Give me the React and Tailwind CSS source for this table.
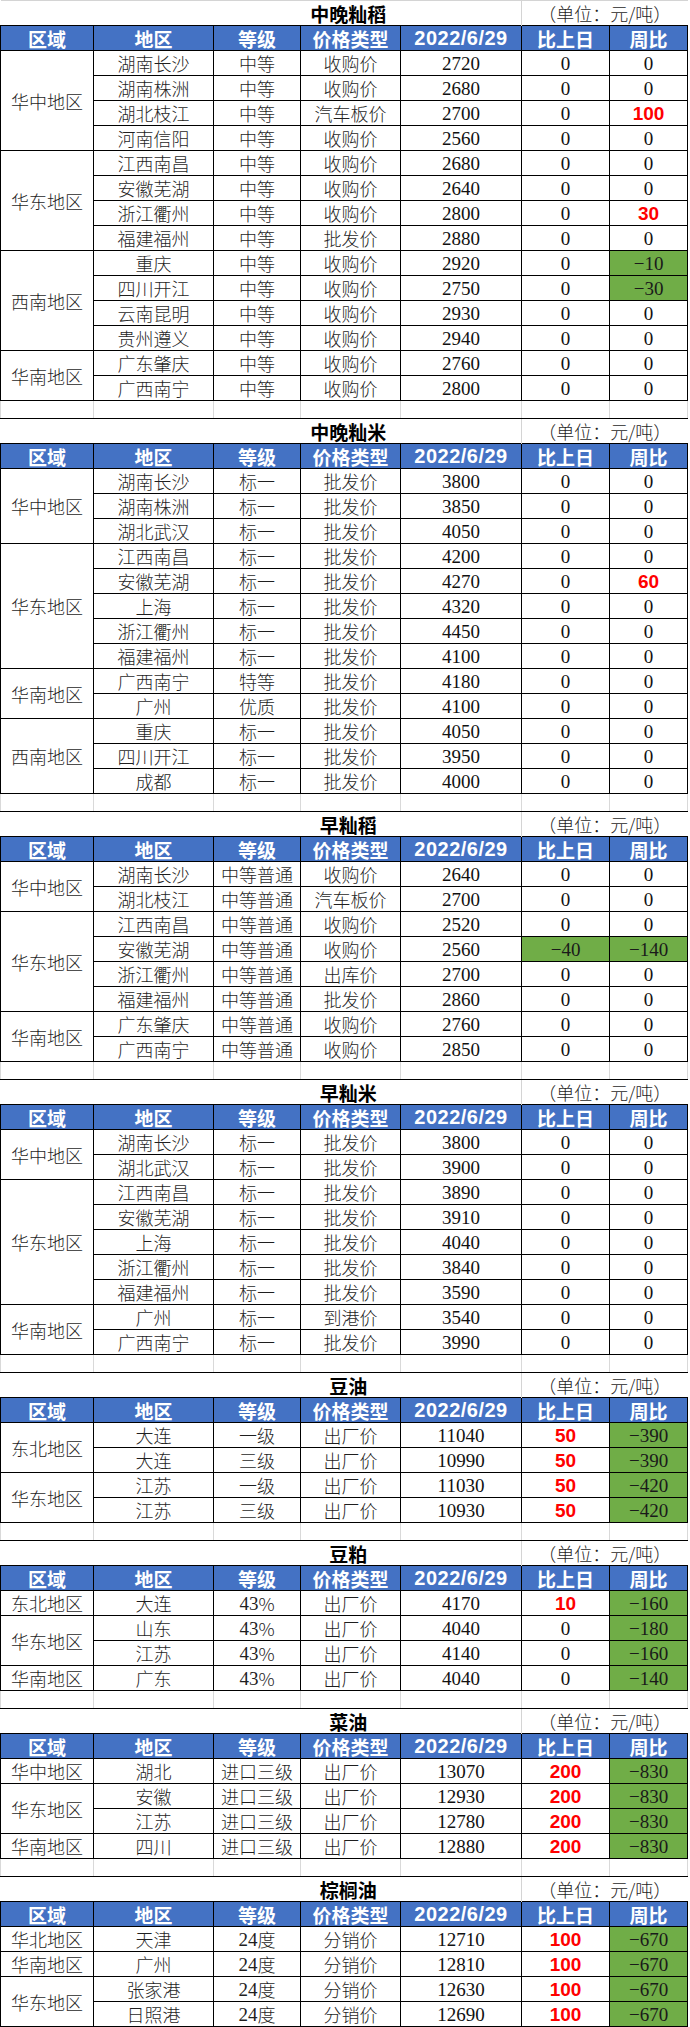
import React from 'react'

const CJK = "font-['Noto_Sans_CJK_SC',sans-serif]"
const NUM = "font-['Liberation_Serif','Noto_Sans_CJK_SC',serif]"

const sections = [
  {
    title: '中晚籼稻',
    groups: [
      ['华中地区', [
        ['湖南长沙', '中等', '收购价', '2720', '0', '0'],
        ['湖南株洲', '中等', '收购价', '2680', '0', '0'],
        ['湖北枝江', '中等', '汽车板价', '2700', '0', '100'],
        ['河南信阳', '中等', '收购价', '2560', '0', '0'],
      ]],
      ['华东地区', [
        ['江西南昌', '中等', '收购价', '2680', '0', '0'],
        ['安徽芜湖', '中等', '收购价', '2640', '0', '0'],
        ['浙江衢州', '中等', '收购价', '2800', '0', '30'],
        ['福建福州', '中等', '批发价', '2880', '0', '0'],
      ]],
      ['西南地区', [
        ['重庆', '中等', '收购价', '2920', '0', '-10'],
        ['四川开江', '中等', '收购价', '2750', '0', '-30'],
        ['云南昆明', '中等', '收购价', '2930', '0', '0'],
        ['贵州遵义', '中等', '收购价', '2940', '0', '0'],
      ]],
      ['华南地区', [
        ['广东肇庆', '中等', '收购价', '2760', '0', '0'],
        ['广西南宁', '中等', '收购价', '2800', '0', '0'],
      ]],
    ],
  },
  {
    title: '中晚籼米',
    groups: [
      ['华中地区', [
        ['湖南长沙', '标一', '批发价', '3800', '0', '0'],
        ['湖南株洲', '标一', '批发价', '3850', '0', '0'],
        ['湖北武汉', '标一', '批发价', '4050', '0', '0'],
      ]],
      ['华东地区', [
        ['江西南昌', '标一', '批发价', '4200', '0', '0'],
        ['安徽芜湖', '标一', '批发价', '4270', '0', '60'],
        ['上海', '标一', '批发价', '4320', '0', '0'],
        ['浙江衢州', '标一', '批发价', '4450', '0', '0'],
        ['福建福州', '标一', '批发价', '4100', '0', '0'],
      ]],
      ['华南地区', [
        ['广西南宁', '特等', '批发价', '4180', '0', '0'],
        ['广州', '优质', '批发价', '4100', '0', '0'],
      ]],
      ['西南地区', [
        ['重庆', '标一', '批发价', '4050', '0', '0'],
        ['四川开江', '标一', '批发价', '3950', '0', '0'],
        ['成都', '标一', '批发价', '4000', '0', '0'],
      ]],
    ],
  },
  {
    title: '早籼稻',
    groups: [
      ['华中地区', [
        ['湖南长沙', '中等普通', '收购价', '2640', '0', '0'],
        ['湖北枝江', '中等普通', '汽车板价', '2700', '0', '0'],
      ]],
      ['华东地区', [
        ['江西南昌', '中等普通', '收购价', '2520', '0', '0'],
        ['安徽芜湖', '中等普通', '收购价', '2560', '-40', '-140'],
        ['浙江衢州', '中等普通', '出库价', '2700', '0', '0'],
        ['福建福州', '中等普通', '批发价', '2860', '0', '0'],
      ]],
      ['华南地区', [
        ['广东肇庆', '中等普通', '收购价', '2760', '0', '0'],
        ['广西南宁', '中等普通', '收购价', '2850', '0', '0'],
      ]],
    ],
  },
  {
    title: '早籼米',
    groups: [
      ['华中地区', [
        ['湖南长沙', '标一', '批发价', '3800', '0', '0'],
        ['湖北武汉', '标一', '批发价', '3900', '0', '0'],
      ]],
      ['华东地区', [
        ['江西南昌', '标一', '批发价', '3890', '0', '0'],
        ['安徽芜湖', '标一', '批发价', '3910', '0', '0'],
        ['上海', '标一', '批发价', '4040', '0', '0'],
        ['浙江衢州', '标一', '批发价', '3840', '0', '0'],
        ['福建福州', '标一', '批发价', '3590', '0', '0'],
      ]],
      ['华南地区', [
        ['广州', '标一', '到港价', '3540', '0', '0'],
        ['广西南宁', '标一', '批发价', '3990', '0', '0'],
      ]],
    ],
  },
  {
    title: '豆油',
    groups: [
      ['东北地区', [
        ['大连', '一级', '出厂价', '11040', '50', '-390'],
        ['大连', '三级', '出厂价', '10990', '50', '-390'],
      ]],
      ['华东地区', [
        ['江苏', '一级', '出厂价', '11030', '50', '-420'],
        ['江苏', '三级', '出厂价', '10930', '50', '-420'],
      ]],
    ],
  },
  {
    title: '豆粕',
    groups: [
      ['东北地区', [['大连', '43%', '出厂价', '4170', '10', '-160']]],
      ['华东地区', [
        ['山东', '43%', '出厂价', '4040', '0', '-180'],
        ['江苏', '43%', '出厂价', '4140', '0', '-160'],
      ]],
      ['华南地区', [['广东', '43%', '出厂价', '4040', '0', '-140']]],
    ],
  },
  {
    title: '菜油',
    groups: [
      ['华中地区', [['湖北', '进口三级', '出厂价', '13070', '200', '-830']]],
      ['华东地区', [
        ['安徽', '进口三级', '出厂价', '12930', '200', '-830'],
        ['江苏', '进口三级', '出厂价', '12780', '200', '-830'],
      ]],
      ['华南地区', [['四川', '进口三级', '出厂价', '12880', '200', '-830']]],
    ],
  },
  {
    title: '棕榈油',
    groups: [
      ['华北地区', [['天津', '24度', '分销价', '12710', '100', '-670']]],
      ['华南地区', [['广州', '24度', '分销价', '12810', '100', '-670']]],
      ['华东地区', [
        ['张家港', '24度', '分销价', '12630', '100', '-670'],
        ['日照港', '24度', '分销价', '12690', '100', '-670'],
      ]],
    ],
  },
]

const headers = ['区域', '地区', '等级', '价格类型', '2022/6/29', '比上日', '周比']

const cell = 'border border-black text-center align-middle p-0 leading-none whitespace-nowrap'
const txt = `text-[18px] font-light text-[#1f1f1f] ${CJK}`

// fixed-height box so font metrics can't stretch the row
function Box({ children }) {
  return <div className="h-[22px] flex items-center justify-center leading-none">{children}</div>
}

function Change({ v }) {
  const n = Number(v)
  if (n > 0) {
    return <td className={`${cell} text-[19px] font-bold text-[#ff0000] font-['Liberation_Sans',sans-serif]`}><Box>{v}</Box></td>
  }
  if (n < 0) {
    return <td className={`${cell} text-[19px] bg-[#70ad47] text-[#1a1a1a] ${NUM}`}><Box>{v.replace('-', '−')}</Box></td>
  }
  return <td className={`${cell} text-[19px] text-[#111] ${NUM}`}><Box>{v}</Box></td>
}

function Section({ s, first, last }) {
  return (
    <>
      <tr className="h-[25px]">
        <td colSpan={5} className={`p-0 pl-[175px] text-center align-middle border-t ${first ? 'border-t-[#d4d4d4]' : 'border-t-black'} text-[19px] font-bold text-black ${CJK}`}>
          <Box>{s.title}</Box>
        </td>
        <td colSpan={2} className={`p-0 text-center align-middle border-t border-l border-l-[#d4d4d4] ${first ? 'border-t-[#d4d4d4]' : 'border-t-black'} ${txt}`}>
          <Box>（单位：元/吨）</Box>
        </td>
      </tr>
      <tr className="h-[25px] bg-[#4472c4]">
        {headers.map((h, i) => (
          <td key={h} className={`${cell} text-white font-bold ${i === 4 ? "text-[20px] font-['Liberation_Sans',sans-serif] tracking-[0.5px]" : `text-[19px] ${CJK}`}`}>
            <Box>{h}</Box>
          </td>
        ))}
      </tr>
      {s.groups.map(([region, rows]) =>
        rows.map((r, i) => (
          <tr key={region + r[0] + r[1] + i} className="h-[25px] bg-white">
            {i === 0 && (
              <td rowSpan={rows.length} className={`${cell} ${txt}`}><Box>{region}</Box></td>
            )}
            <td className={`${cell} ${txt}`}><Box>{r[0]}</Box></td>
            <td className={`${cell} ${txt}`}>
              <Box>
                {/^\d/.test(r[1]) ? (
                  <><span className={`${NUM} font-normal text-[19px]`}>{r[1].slice(0, 2)}</span>{r[1].slice(2)}</>
                ) : r[1]}
              </Box>
            </td>
            <td className={`${cell} ${txt}`}><Box>{r[2]}</Box></td>
            <td className={`${cell} text-[19px] text-[#111] ${NUM}`}><Box>{r[3]}</Box></td>
            <Change v={r[4]} />
            <Change v={r[5]} />
          </tr>
        ))
      )}
      {!last && (
        <tr className="h-[18px]">
          {headers.map(h => (
            <td key={h} className="p-0 border border-x-[#d9d9d9] border-t-black border-b-black" />
          ))}
        </tr>
      )}
    </>
  )
}

export default function App() {
  return (
    <div className="w-[690px] bg-white">
      <table className="border-collapse table-fixed w-[687px]">
        <colgroup>
          <col className="w-[93px]" />
          <col className="w-[120px]" />
          <col className="w-[87px]" />
          <col className="w-[100px]" />
          <col className="w-[121px]" />
          <col className="w-[88px]" />
          <col className="w-[78px]" />
        </colgroup>
        <tbody>
          {sections.map((s, i) => (
            <Section key={s.title} s={s} first={i === 0} last={i === sections.length - 1} />
          ))}
        </tbody>
      </table>
    </div>
  )
}
